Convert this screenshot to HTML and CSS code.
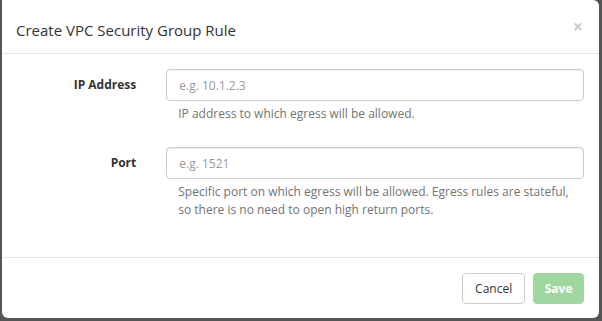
FILE: index.html
```html
<!DOCTYPE html>
<html lang="en">
<head>
    <meta charset="UTF-8">
    <title>Create VPC Security Group Rule</title>
    <link rel="stylesheet" href="styles.css">
</head>
<body>

<div class="modal">
    <div class="modal-header">
        <span class="close">&times;</span>
        <h4 class="modal-title">Create VPC Security Group Rule</h4>
    </div>

    <div class="modal-body">
        <!-- IP -->
        <div class="form-group">
            <label class="form-label" for="ip">IP Address</label>
            <div class="form-field">
                <input type="text" id="ip" class="form-control" placeholder="e.g. 10.1.2.3">
                <p class="help-block">IP address to which egress will be allowed.</p>
            </div>
        </div>

        <!-- Puerto -->
        <div class="form-group">
            <label class="form-label" for="port">Port</label>
            <div class="form-field">
                <input type="text" id="port" class="form-control" placeholder="e.g. 1521">
                <p class="help-block">Specific port on which egress will be allowed. Egress rules are stateful, so there is no need to open high return ports.</p>
            </div>
        </div>
    </div>

    <div class="modal-footer">
        <button class="btn btn-default">Cancel</button>
        <button class="btn btn-success" disabled>Save</button>
    </div>
</div>

</body>
</html>
```

FILE: styles.css
```css
* {
    box-sizing: border-box;
    font-family: 'Open Sans', 'Liberation Sans', sans-serif;
}

body {
    margin: 0;
    padding: 0;
    background-color: #555;
    height: 100vh;
    overflow: hidden;
}

.modal {
    margin: 0 3px 0 2px;
    background-color: #fff;
    border-radius: 0 6px 6px 6px;
    height: 318px;
}

.modal-header {
    height: 54px;
    padding: 15px 16px 15px 14px;
    border-bottom: 1px solid #e5e5e5;
}

.modal-title {
    margin: 0;
    padding-top: 2px;
    font-size: 15px;
    font-weight: normal;
    line-height: 26px;
    color: #333;
}

.close {
    float: right;
    margin-top: 2px;
    font-size: 18px;
    font-weight: bold;
    line-height: 18px;
    color: #ccc;
}

.modal-body {
    height: 203px;
    padding: 15px 15px 0;
}

.form-group {
    display: flex;
    margin: 0 -15px 15px;
}

.form-label {
    width: 25%;
    padding: 0 15px 0 0;
    text-align: right;
    font-size: 12px;
    font-weight: bold;
    line-height: 32px;
    color: #333;
}

.form-field {
    width: 75%;
    padding: 0 15px;
}

.form-control {
    display: block;
    width: 100%;
    height: 32px;
    padding: 6px 12px;
    font-size: 12px;
    color: #555;
    border: 1px solid #ccc;
    border-radius: 4px;
    box-shadow: inset 0 1px 1px rgba(0, 0, 0, 0.075);
}

.form-control::placeholder {
    color: #999;
}

.help-block {
    margin: 4px 0 9px;
    padding-left: 12px;
    font-size: 12px;
    line-height: 18px;
    color: #737373;
}

.modal-footer {
    padding: 15px;
    border-top: 1px solid #e5e5e5;
    display: flex;
    justify-content: flex-end;
    gap: 8px;
}

.btn {
    height: 31px;
    padding: 0 12px;
    font-size: 12px;
    border-radius: 4px;
    border: 1px solid #ccc;
}

.btn-default {
    background-color: #fff;
    color: #333;
}

.btn-success {
    background-color: #a0d6a0;
    border-color: #a0d6a0;
    color: #fff;
    font-weight: bold;
    padding: 0 10.5px;
}
```
